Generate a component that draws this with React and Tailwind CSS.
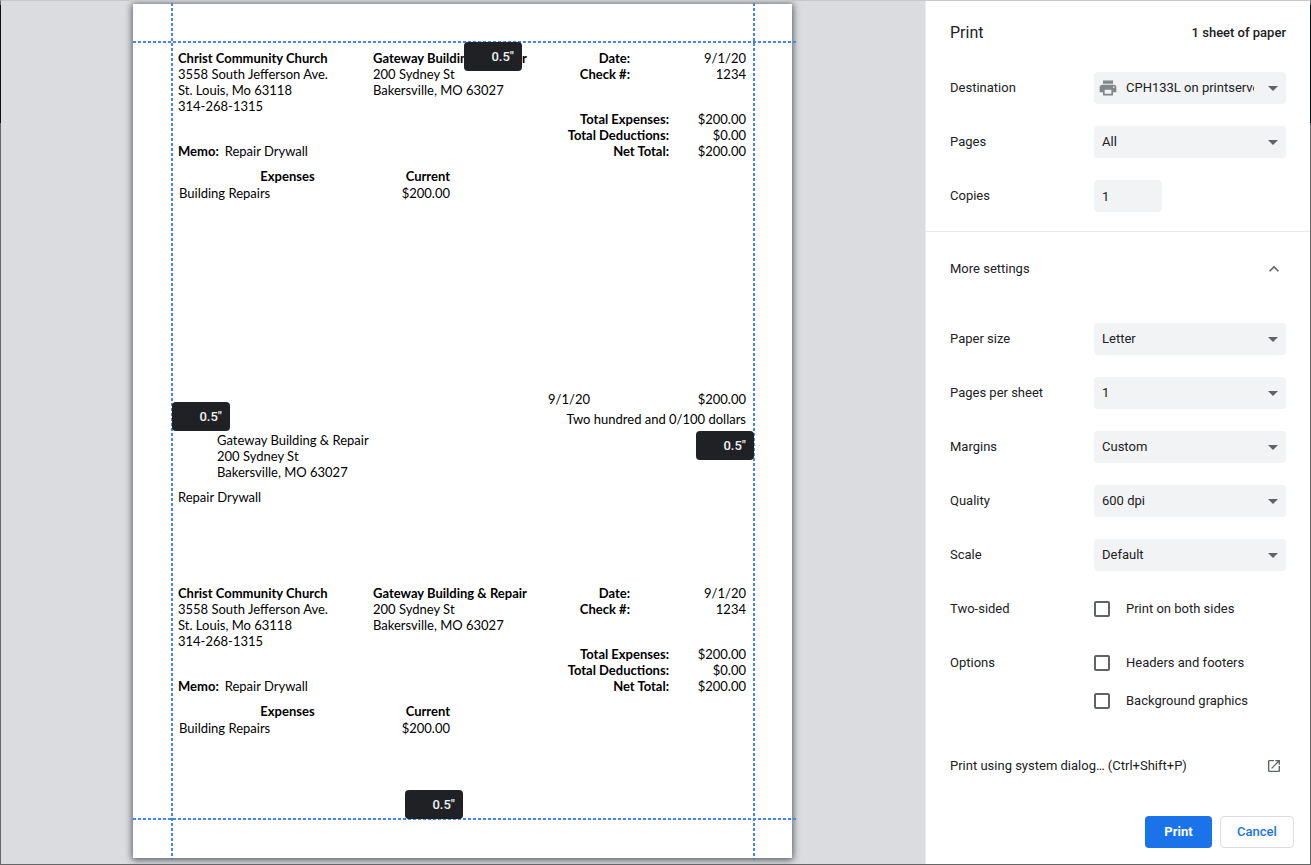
import { useState } from "react";
import { MdArrowDropDown, MdExpandLess, MdOpenInNew, MdPrint } from "react-icons/md";

const payer = ["3558 South Jefferson Ave.", "St. Louis, Mo 63118", "314-268-1315"];
const payee = ["200 Sydney St", "Bakersville, MO 63027"];

const totals = [
  { label: "Total Expenses:", value: "$200.00" },
  { label: "Total Deductions:", value: "$0.00" },
  { label: "Net Total:", value: "$200.00" },
];

const moreSettings = [
  { id: "paper", label: "Paper size", options: ["Letter", "Legal", "A4"] },
  { id: "per-sheet", label: "Pages per sheet", options: ["1", "2", "4"] },
  { id: "margins", label: "Margins", options: ["Custom", "Default", "None"] },
  { id: "quality", label: "Quality", options: ["600 dpi", "1200 dpi"] },
  { id: "scale", label: "Scale", options: ["Default", "Custom"] },
];

const vDash = "absolute -top-px -bottom-0.5 w-0.5 bg-[repeating-linear-gradient(to_bottom,#4285f4_0_3px,transparent_3px_5px)]";
const hDash = "absolute left-0 -right-1 h-0.5 bg-[repeating-linear-gradient(to_right,#4285f4_0_3px,transparent_3px_5px)]";

function MarginInput({ label, className }) {
  const [value, setValue] = useState('0.5"');
  return (
    <input
      aria-label={label}
      value={value}
      onChange={(e) => setValue(e.target.value)}
      className={`absolute h-[29px] w-[58px] rounded bg-[#202124] pr-2 text-right font-[Roboto,sans-serif] text-[13px] font-medium text-[#f1f3f4] outline-none ${className}`}
    />
  );
}

function Stub() {
  return (
    <section>
      <div className="flex h-[109px] justify-between">
        <div className="flex flex-col justify-between">
          <div className="flex">
            <div className="w-[195px]">
              <h3 className="font-bold">Christ Community Church</h3>
              {payer.map((line) => (
                <p key={line}>{line}</p>
              ))}
            </div>
            <div>
              <h3 className="font-bold">Gateway Building &amp; Repair</h3>
              {payee.map((line) => (
                <p key={line}>{line}</p>
              ))}
            </div>
          </div>
          <p>
            <b className="mr-1.5">Memo:</b>Repair Drywall
          </p>
        </div>
        <div className="flex flex-col justify-between text-right">
          <div>
            <div className="flex justify-end">
              <b>Date:</b>
              <span className="w-[116px]">9/1/20</span>
            </div>
            <div className="flex justify-end">
              <b>Check #:</b>
              <span className="w-[116px]">1234</span>
            </div>
          </div>
          <div>
            {totals.map((t) => (
              <div key={t.label} className="flex justify-end">
                <b>{t.label}</b>
                <span className="w-[77px]">{t.value}</span>
              </div>
            ))}
          </div>
        </div>
      </div>
      <table className="mt-[9px] leading-[17px]">
        <thead>
          <tr>
            <th className="w-[219px] p-0 font-bold">Expenses</th>
            <th className="w-[53px] p-0 text-right font-bold">Current</th>
          </tr>
        </thead>
        <tbody>
          <tr>
            <td className="p-0 pl-px">Building Repairs</td>
            <td className="p-0 text-right">$200.00</td>
          </tr>
        </tbody>
      </table>
    </section>
  );
}

function Check() {
  return (
    <section className="mt-[189px] mb-20">
      <div className="flex justify-end">
        <span>9/1/20</span>
        <span className="w-[156px] text-right">$200.00</span>
      </div>
      <p className="mt-1 text-right">Two hundred and 0/100 dollars</p>
      <div className="mt-[5px] pl-[39px]">
        <p>Gateway Building &amp; Repair</p>
        {payee.map((line) => (
          <p key={line}>{line}</p>
        ))}
      </div>
      <p className="mt-[9px]">Repair Drywall</p>
    </section>
  );
}

function SelectRow({ id, label, options, icon }) {
  return (
    <div className="flex items-center">
      <label htmlFor={id} className="w-36 shrink-0">{label}</label>
      <div className="relative flex h-8 flex-1 items-center rounded bg-[#f1f3f4] pr-8 pl-2">
        {icon && <MdPrint className="-ml-1 mr-2 size-5 shrink-0 text-[#80868b]" />}
        <select id={id} className="h-8 w-full min-w-0 appearance-none overflow-hidden bg-transparent text-clip outline-none">
          {options.map((o) => (
            <option key={o}>{o}</option>
          ))}
        </select>
        <MdArrowDropDown className="pointer-events-none absolute right-px size-6 text-[#5f6368]" />
      </div>
    </div>
  );
}

function CheckOption({ label }) {
  return (
    <label className="flex h-5 items-center gap-4">
      <input type="checkbox" className="size-4 appearance-none rounded-xs border-2 border-[#5f6368] checked:bg-[#1a73e8]" />
      {label}
    </label>
  );
}

export default function App() {
  const [copies, setCopies] = useState(1);
  const [open, setOpen] = useState(true);

  return (
    <div className="relative flex min-h-screen border border-[#666] border-t-[#c8c8c8] bg-[#dadce0]">
      {/* dark window edges */}
      <div className="absolute top-1 -left-px h-[118px] w-px bg-[#0b1114]" />
      <div className="absolute top-1 -right-px h-[118px] w-px bg-[#0b1114]" />

      <main className="flex flex-1 justify-center overflow-hidden pt-[3px] pr-px pb-1.5">
        <div className="relative w-[659px] bg-white pt-[46px] pr-[46px] pl-[45px] font-[Lato,sans-serif] text-[13px] leading-4 text-black shadow-[0_1px_7px_1px_rgba(0,0,0,0.6)]">
          <Stub />
          <Check />
          <Stub />
          <div className={`left-[38px] ${vDash}`} />
          <div className={`right-[37px] ${vDash}`} />
          <div className={`top-[37px] ${hDash}`} />
          <div className={`bottom-[38px] ${hDash}`} />
          <MarginInput label="Top margin" className="top-[38px] left-[331px]" />
          <MarginInput label="Left margin" className="top-[398px] left-[39px]" />
          <MarginInput label="Right margin" className="top-[427px] right-[38px]" />
          <MarginInput label="Bottom margin" className="bottom-[39px] left-[272px]" />
        </div>
      </main>

      <aside className="flex w-[385px] shrink-0 flex-col border-l border-[#e8eaed] bg-white font-[Roboto,sans-serif] text-[13px] leading-5 text-[#202124]">
        <header className="flex items-center justify-between px-6 pt-[22px]">
          <h1 className="text-base leading-5">Print</h1>
          <span className="font-medium">1 sheet of paper</span>
        </header>

        <div className="mt-[29px] flex flex-col gap-[22px] border-b border-[#e8eaed] px-6 pb-[19px]">
          <SelectRow id="destination" label="Destination" options={["CPH133L on printserver"]} icon />
          <SelectRow id="pages" label="Pages" options={["All", "Custom"]} />
          <div className="flex items-center">
            <label htmlFor="copies" className="w-36">Copies</label>
            <input
              id="copies"
              type="number"
              value={copies}
              onChange={(e) => setCopies(e.target.value)}
              className="h-8 w-[68px] appearance-none rounded bg-[#f1f3f4] px-2 outline-none [appearance:textfield]"
            />
          </div>
        </div>

        <button onClick={() => setOpen(!open)} className="mt-[27px] flex items-center justify-between px-6 text-left">
          More settings
          <MdExpandLess className="mr-0.5 size-5 text-[#5f6368]" />
        </button>

        {open && (
          <div className="mt-11 flex flex-col gap-[22px] px-6">
            {moreSettings.map((s) => (
              <SelectRow key={s.id} {...s} />
            ))}
            <div className="flex pt-1.5">
              <span className="w-36">Two-sided</span>
              <CheckOption label="Print on both sides" />
            </div>
            <div className="mt-3 flex">
              <span className="w-36">Options</span>
              <div className="flex flex-col gap-[18px]">
                <CheckOption label="Headers and footers" />
                <CheckOption label="Background graphics" />
              </div>
            </div>
          </div>
        )}

        <button className="mt-[45px] flex items-center justify-between px-6 text-left">
          Print using system dialog… (Ctrl+Shift+P)
          <MdOpenInNew className="mr-1 size-4 text-[#5f6368]" />
        </button>

        <footer className="mt-auto flex justify-end gap-2 px-4 pb-4">
          <button className="h-8 w-[67px] rounded bg-[#1a73e8] font-bold text-white">Print</button>
          <button className="h-8 w-[74px] rounded border border-[#dadce0] font-medium text-[#1a73e8]">Cancel</button>
        </footer>
      </aside>
    </div>
  );
}
